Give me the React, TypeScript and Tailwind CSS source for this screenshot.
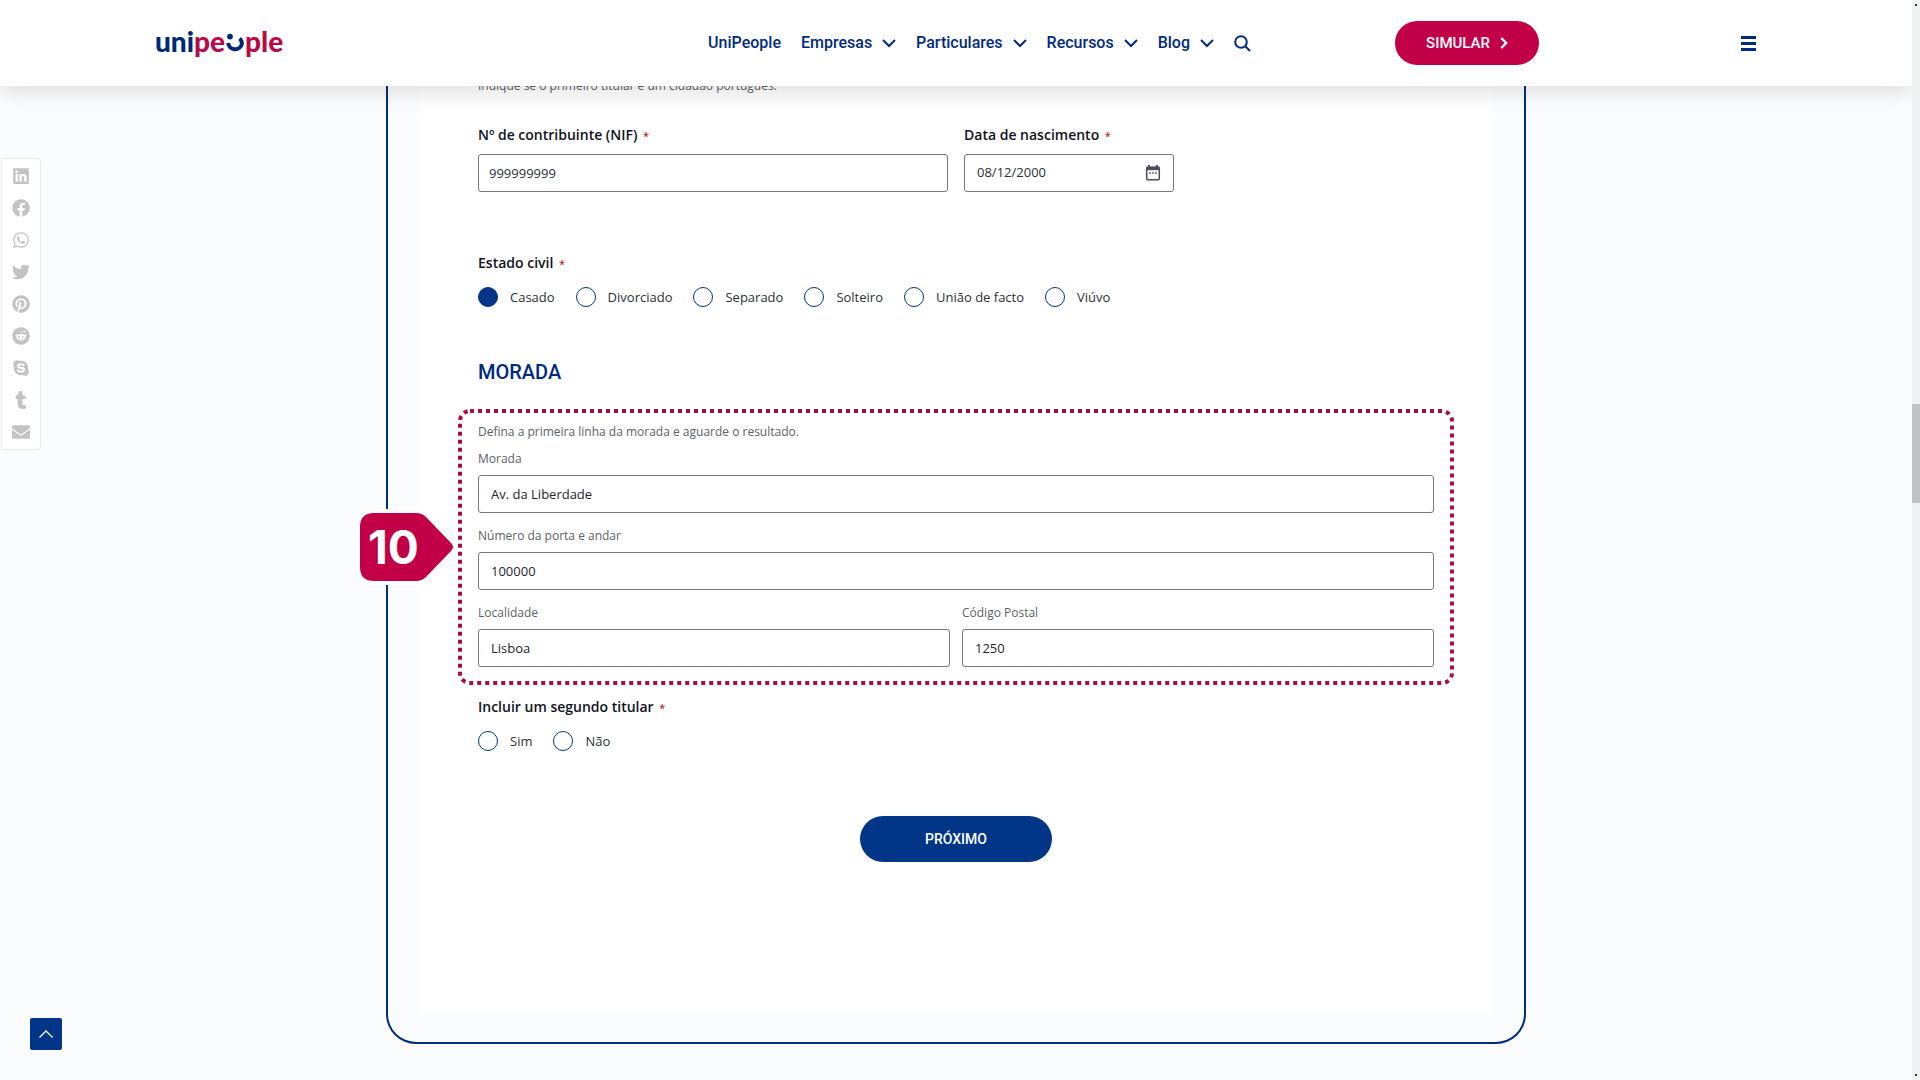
import { useState } from "react"
import {
  FaEnvelope,
  FaFacebook,
  FaLinkedin,
  FaPinterest,
  FaReddit,
  FaSkype,
  FaTumblr,
  FaTwitter,
  FaWhatsapp,
} from "react-icons/fa"

const navItems = [
  { label: "UniPeople", menu: false },
  { label: "Empresas", menu: true },
  { label: "Particulares", menu: true },
  { label: "Recursos", menu: true },
  { label: "Blog", menu: true },
]

const shareItems = [
  { name: "LinkedIn", Icon: FaLinkedin },
  { name: "Facebook", Icon: FaFacebook },
  { name: "WhatsApp", Icon: FaWhatsapp },
  { name: "Twitter", Icon: FaTwitter },
  { name: "Pinterest", Icon: FaPinterest },
  { name: "Reddit", Icon: FaReddit },
  { name: "Skype", Icon: FaSkype },
  { name: "Tumblr", Icon: FaTumblr },
  { name: "Email", Icon: FaEnvelope },
]

const DownIcon = () => (
  <svg width="14" height="9" viewBox="0 0 14 9" fill="none" stroke="currentColor" strokeWidth="2">
    <path d="M1 1l6 6 6-6" />
  </svg>
)

const RightIcon = () => (
  <svg width="8" height="12" viewBox="0 0 8 12" fill="none" stroke="currentColor" strokeWidth="2.4">
    <path d="M1.2 1l5 5-5 5" />
  </svg>
)

const UpIcon = () => (
  <svg width="14" height="8" viewBox="0 0 14 8" fill="none" stroke="currentColor" strokeWidth="1.3">
    <path d="M.5 7.5L7 1l6.5 6.5" />
  </svg>
)

const SearchIcon = () => (
  <svg width="17" height="17" viewBox="0 0 17 17" fill="none" stroke="currentColor" strokeWidth="2">
    <circle cx="7" cy="7" r="5.8" />
    <path d="M11 11l5 5" />
  </svg>
)

const CalendarIcon = () => (
  <svg width="16" height="16" viewBox="0 0 16 16" fill="none" stroke="#4a4f58">
    <path d="M4 0v3M12 0v3" strokeWidth="1.8" />
    <rect x="1.7" y="2.2" width="12.6" height="12.6" rx="1" strokeWidth="1.5" />
    <path d="M1.5 3.5h13" strokeWidth="3.4" />
    <path d="M4.2 8h1.6M7.2 8h1.6M10.2 8h1.6" strokeWidth="1.4" />
  </svg>
)

const Logo = () => (
  <a
    href="#"
    aria-label="unipeople"
    className="flex items-center pb-1 font-['Lato',sans-serif] text-[28px] leading-8 font-black text-[#00287a]"
  >
    <span>uni</span>
    <span className="text-[#b80a48]">pe</span>
    <svg className="mt-1" width="20" height="20" viewBox="0 0 18 18" fill="none">
      <circle cx="4.5" cy="3.2" r="2.6" fill="#00287a" />
      <path d="M2.9 8.8a6.2 6.2 0 0 0 12.3.7c0-1.900-.8-3.500-2.100-4.600" stroke="#00287a" strokeWidth="3.6" />
    </svg>
    <span className="text-[#b80a48]">ple</span>
  </a>
)

const Header = () => (
  <header className="sticky top-0 z-20 flex h-[86px] items-center bg-white px-[155px] font-['Roboto',sans-serif] font-medium text-[#002a80] shadow-[0_4px_24px_rgba(0,0,0,0.14)]">
    <div className="mr-auto">
      <Logo />
    </div>
    <nav className="flex items-center gap-5">
      {navItems.map((item) => (
        <a key={item.label} href="#" className="flex items-center gap-[10px] text-base">
          {item.label}
          {item.menu && <DownIcon />}
        </a>
      ))}
      <button type="button" aria-label="Pesquisar">
        <SearchIcon />
      </button>
    </nav>
    <button
      type="button"
      className="mr-[202px] ml-36 flex h-11 w-36 items-center justify-center gap-[10px] rounded-full bg-[#c20048] text-[15px] text-white"
    >
      SIMULAR
      <RightIcon />
    </button>
    <button type="button" aria-label="Menu" className="flex w-4 flex-col gap-[3px]">
      <span className="h-[3px] w-[15px] bg-[#002a80]" />
      <span className="h-[3px] w-[15px] bg-[#002a80]" />
      <span className="h-[3px] w-[15px] bg-[#002a80]" />
    </button>
  </header>
)

const ShareBar = () => (
  <aside className="absolute top-[158px] left-px z-10 flex w-10 flex-col items-center gap-[14px] rounded-r border border-[#e8eaec] bg-white py-2 text-[#c2c3c5]">
    {shareItems.map(({ name, Icon }) => (
      <a key={name} href="#" aria-label={name}>
        <Icon className="size-[18px]" />
      </a>
    ))}
  </aside>
)

interface FieldProps {
  id: string
  label: string
  value: string
}

const Field = ({ id, label, value }: FieldProps) => (
  <div className="flex flex-1 flex-col gap-[6px]">
    <label htmlFor={id} className="text-xs leading-5 text-[#5c6169]">
      {label}
    </label>
    <input
      id={id}
      type="text"
      defaultValue={value}
      className="h-[38px] w-full rounded-[3px] border border-[#777] bg-white px-3 text-[13px] text-[#1f2430]"
    />
  </div>
)

const Required = () => <span className="ml-[2px] text-[11px] text-[#c02b2b]">*</span>

interface RadioRowProps {
  name: string
  legend: string
  options: string[]
  initial?: string
}

const RadioRow = ({ name, legend, options, initial = "" }: RadioRowProps) => {
  const [selected, setSelected] = useState(initial)

  return (
    <fieldset>
      <legend className="text-sm leading-5 font-semibold text-[#101223]">
        {legend} <Required />
      </legend>
      <div className="mt-[13px] flex gap-[21px]">
        {options.map((option) => (
          <label key={option} className="flex items-center gap-3 text-[13px] leading-5 text-[#2b2f36]">
            <input
              type="radio"
              name={name}
              value={option}
              checked={selected === option}
              onChange={() => setSelected(option)}
              className="size-5 appearance-none rounded-full border border-[#003580] bg-white checked:bg-[#003587]"
            />
            {option}
          </label>
        ))}
      </div>
    </fieldset>
  )
}

const StepMarker = () => (
  <div className="absolute top-1/2 -left-[102px] flex h-[76px] w-[102px] -translate-y-1/2 items-center">
    <svg className="absolute inset-0" width="102" height="76" viewBox="0 0 102 76">
      <path
        d="M18 4H60Q66 4 70 8L95 34Q99 38 95 42L70 68Q66 72 60 72H18Q4 72 4 58V18Q4 4 18 4Z"
        fill="#c20048"
        stroke="#fff"
        strokeWidth="8"
        paintOrder="stroke"
      />
    </svg>
    <span className="relative pl-3 font-['Inter',sans-serif] text-[46px] font-bold text-white">10</span>
  </div>
)

const AddressBox = () => (
  <section className="relative -mx-5 mt-[23px] px-5 pt-[13px] pb-[18px]">
    <div className="pointer-events-none absolute inset-[2px]">
      <svg className="size-full overflow-visible" fill="none">
        <rect width="100%" height="100%" rx="10" stroke="#a80d43" strokeWidth="4" strokeDasharray="4 4" />
      </svg>
    </div>
    <StepMarker />
    <p className="mb-[7px] text-xs leading-5 text-[#5c6169]">
      Defina a primeira linha da morada e aguarde o resultado.
    </p>
    <div className="flex flex-col gap-[13px]">
      <Field id="morada" label="Morada" value="Av. da Liberdade" />
      <Field id="porta" label="Número da porta e andar" value="100000" />
      <div className="flex gap-3">
        <Field id="localidade" label="Localidade" value="Lisboa" />
        <Field id="postal" label="Código Postal" value="1250" />
      </div>
    </div>
  </section>
)

const HolderForm = () => (
  <form className="bg-white px-[60px] pb-[150px]">
    <p className="text-xs leading-5 text-[#5c6169]">Indique se o primeiro titular é um cidadão português.</p>

    <div className="mt-[29px] flex gap-4">
      <div className="flex w-[470px] flex-col gap-2">
        <label htmlFor="nif" className="text-sm leading-5 font-semibold text-[#101223]">
          Nº de contribuinte (NIF) <Required />
        </label>
        <input
          id="nif"
          type="text"
          defaultValue="999999999"
          className="h-[38px] rounded-[3px] border border-[#777] bg-white px-[10px] text-[13px] text-[#2b2f36]"
        />
      </div>
      <div className="flex w-[210px] flex-col gap-2">
        <label htmlFor="nascimento" className="text-sm leading-5 font-semibold text-[#101223]">
          Data de nascimento <Required />
        </label>
        <div className="flex h-[38px] items-center rounded-[3px] border border-[#777] bg-white px-3">
          <input
            id="nascimento"
            type="text"
            defaultValue="08/12/2000"
            className="min-w-0 flex-1 text-[13px] text-[#2b2f36]"
          />
          <button type="button" aria-label="Abrir calendário">
            <CalendarIcon />
          </button>
        </div>
      </div>
    </div>

    <div className="mt-[61px]">
      <RadioRow
        name="estado"
        legend="Estado civil"
        options={["Casado", "Divorciado", "Separado", "Solteiro", "União de facto", "Viúvo"]}
        initial="Casado"
      />
    </div>

    <h2 className="mt-[51px] font-['Roboto',sans-serif] text-xl leading-7 font-medium text-[#002a80]">MORADA</h2>
    <AddressBox />

    <div className="mt-3">
      <RadioRow name="segundo" legend="Incluir um segundo titular" options={["Sim", "Não"]} />
    </div>

    <div className="mt-[65px] flex justify-center">
      <button
        type="button"
        className="h-[46px] w-48 rounded-full bg-[#003587] font-['Roboto',sans-serif] text-sm font-medium text-white"
      >
        PRÓXIMO
      </button>
    </div>
  </form>
)

const Scrollbar = () => (
  <div className="flex w-2 flex-col items-center justify-between bg-[#f0f1f1] py-1">
    <span className="size-[2px] bg-[#333]" />
    <span className="-mt-[174px] h-[99px] w-2 bg-[#c1c2c2]" />
    <span className="size-[2px] bg-[#333]" />
  </div>
)

export default function App() {
  return (
    <div className="flex h-screen overflow-hidden bg-[#fafcfe] font-['Open_Sans',sans-serif]">
      <div className="relative flex-1 overflow-hidden">
        <Header />
        <ShareBar />
        <main className="mx-auto -mt-[10px] max-w-[1140px] rounded-b-[30px] border-x-2 border-b-2 border-[#002f7a] px-[30px] pb-[30px]">
          <HolderForm />
        </main>
        <button
          type="button"
          aria-label="Voltar ao topo"
          className="absolute bottom-[30px] left-[30px] flex size-8 items-center justify-center rounded-xs bg-[#003587] text-white"
        >
          <UpIcon />
        </button>
      </div>
      <Scrollbar />
    </div>
  )
}
